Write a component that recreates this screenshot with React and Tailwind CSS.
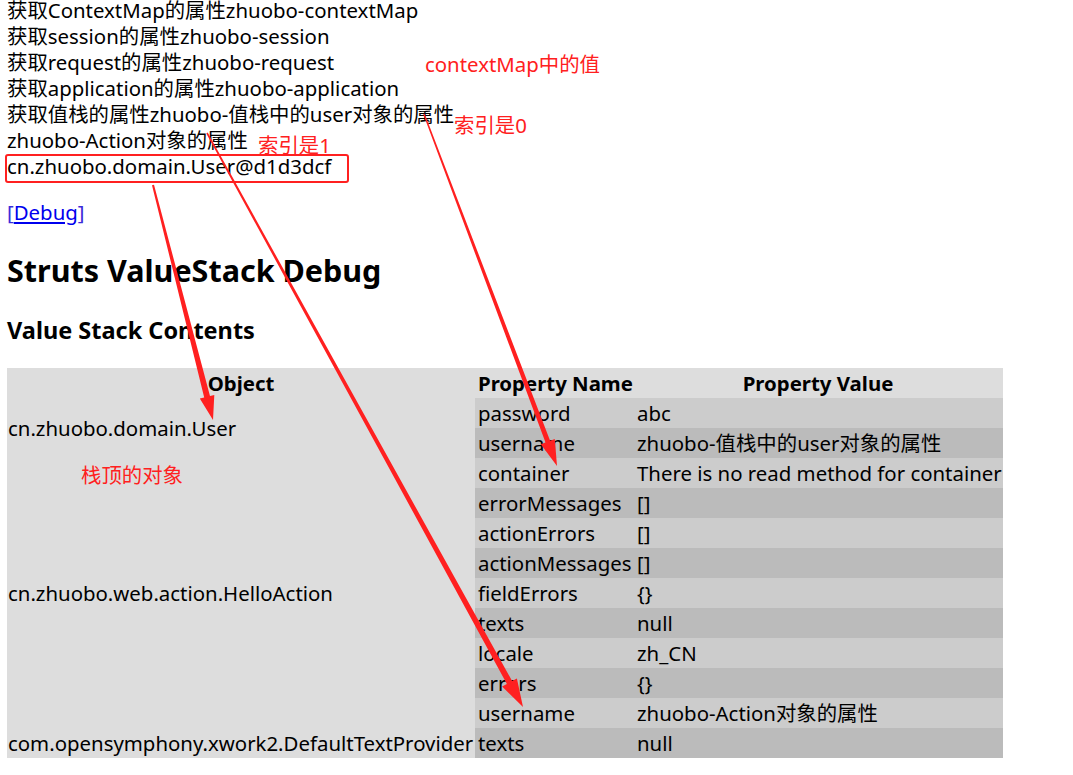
import React from 'react'

const lines = [
  '获取ContextMap的属性zhuobo-contextMap',
  '获取session的属性zhuobo-session',
  '获取request的属性zhuobo-request',
  '获取application的属性zhuobo-application',
  '获取值栈的属性zhuobo-值栈中的user对象的属性',
  'zhuobo-Action对象的属性',
  'cn.zhuobo.domain.User@d1d3dcf',
]

const stack = [
  {
    object: 'cn.zhuobo.domain.User',
    props: [
      ['password', 'abc'],
      ['username', 'zhuobo-值栈中的user对象的属性'],
    ],
  },
  {
    object: 'cn.zhuobo.web.action.HelloAction',
    props: [
      ['container', 'There is no read method for container'],
      ['errorMessages', '[]'],
      ['actionErrors', '[]'],
      ['actionMessages', '[]'],
      ['fieldErrors', '{}'],
      ['texts', 'null'],
      ['locale', 'zh_CN'],
      ['errors', '{}'],
      ['username', 'zhuobo-Action对象的属性'],
    ],
  },
  {
    object: 'com.opensymphony.xwork2.DefaultTextProvider',
    props: [['texts', 'null']],
  },
]

// tapered arrow: thin at the start, wider at the head
function arrowPoints(x1, y1, x2, y2, w0, w1, headLen, headW) {
  const dx = x2 - x1
  const dy = y2 - y1
  const len = Math.hypot(dx, dy)
  const ux = dx / len
  const uy = dy / len
  const nx = -uy
  const ny = ux
  const bx = x2 - ux * headLen
  const by = y2 - uy * headLen
  const p = [
    [x1 + (nx * w0) / 2, y1 + (ny * w0) / 2],
    [bx + (nx * w1) / 2, by + (ny * w1) / 2],
    [bx + (nx * headW) / 2, by + (ny * headW) / 2],
    [x2, y2],
    [bx - (nx * headW) / 2, by - (ny * headW) / 2],
    [bx - (nx * w1) / 2, by - (ny * w1) / 2],
    [x1 - (nx * w0) / 2, y1 - (ny * w0) / 2],
  ]
  return p.map(([x, y]) => `${x.toFixed(1)},${y.toFixed(1)}`).join(' ')
}

function Annotations() {
  return (
    <svg className="absolute top-0 left-0 pointer-events-none" width="1073" height="775" viewBox="0 0 1073 775">
      <rect x="6" y="155" width="342" height="27" rx="2" fill="none" stroke="#ff2020" strokeWidth="2" />
      <polygon points={arrowPoints(153, 185, 213, 420, 2, 6, 24, 15)} fill="#ff2020" />
      <polygon points={arrowPoints(207, 133, 523, 707, 1.5, 6, 28, 17)} fill="#ff2020" />
      <polygon points={arrowPoints(424, 114, 557, 466, 1.5, 5, 26, 15)} fill="#ff2020" />
    </svg>
  )
}

export default function App() {
  let rowIndex = 0
  return (
    <div className="relative w-[1073px] h-[775px] overflow-hidden bg-white text-black font-['Noto_Sans','Noto_Sans_CJK_SC',sans-serif]">
      <div className="pl-[7px] mt-[-3px]">
        <div className="text-[20.4px] leading-[26px]">
          {lines.map((line) => (
            <div key={line}>{line}</div>
          ))}
        </div>

        <div className="mt-[20px] text-[20.4px] leading-[26px] text-[#3b2bd9]">
          [<span className="underline text-[#0000ee]">Debug</span>]
        </div>

        <h1 className="mt-[27px] text-[30.5px] leading-[36px] font-bold">Struts ValueStack Debug</h1>
        <h2 className="mt-[27px] text-[23.5px] leading-[30px] font-bold">Value Stack Contents</h2>

        <table className="mt-[23px] border-collapse table-fixed w-[996px] text-[20.4px] leading-[26px]">
          <colgroup>
            <col className="w-[468px]" />
            <col className="w-[158px]" />
            <col className="w-[370px]" />
          </colgroup>
          <thead>
            <tr className="h-[30px] bg-[#dddddd]">
              <th className="p-0 font-bold text-center">Object</th>
              <th className="p-0 pl-[3px] font-bold text-left">Property Name</th>
              <th className="p-0 font-bold text-center">Property Value</th>
            </tr>
          </thead>
          <tbody>
            {stack.map((item) =>
              item.props.map(([name, value], i) => {
                const dark = rowIndex++ % 2 === 1
                const tone = dark ? 'bg-[#bbbbbb]' : 'bg-[#cccccc]'
                return (
                  <tr key={item.object + name + i} className="h-[30px]">
                    {i === 0 && (
                      <td rowSpan={item.props.length} className="p-0 pl-[1px] bg-[#dddddd] align-middle whitespace-nowrap">
                        {item.object}
                      </td>
                    )}
                    <td className={`p-0 pl-[3px] whitespace-nowrap ${tone}`}>{name}</td>
                    <td className={`p-0 pl-[4px] whitespace-nowrap ${tone}`}>{value}</td>
                  </tr>
                )
              })
            )}
          </tbody>
        </table>
      </div>

      <div className="absolute left-[425px] top-[51px] text-[20.4px] leading-[26px] text-[#ff2020]">contextMap中的值</div>
      <div className="absolute left-[454px] top-[112px] text-[20.4px] leading-[26px] text-[#ff2020]">索引是0</div>
      <div className="absolute left-[258px] top-[132px] text-[20.4px] leading-[26px] text-[#ff2020]">索引是1</div>
      <div className="absolute left-[81px] top-[462px] text-[20.4px] leading-[26px] text-[#ff2020]">栈顶的对象</div>

      <Annotations />
    </div>
  )
}
